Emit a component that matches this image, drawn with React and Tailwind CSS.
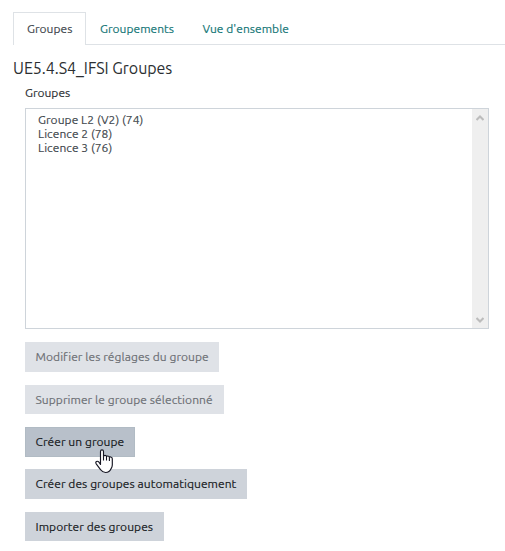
function Tab({ label, active, className }) {
  return (
    <a
      className={`flex h-[33px] items-center text-[12px] tracking-[0.03px] ${
        active
          ? "border border-b-0 border-[#dee2e6] bg-white text-[#40464c]"
          : "border-b border-[#dee2e6] pt-px text-[#127575]"
      } ${className}`}
    >
      {label}
    </a>
  );
}

function Button({ label, tone, className }) {
  const tones = {
    disabled: "bg-[#dfe2e7] text-[#6c6f74]",
    normal: "bg-[#ced3da] text-[#16191c]",
    hover: "border border-[#b1bbc4] bg-[#b8c0ca] text-[#16191c]",
  };
  return (
    <button className={`flex items-center text-[12px] tracking-[0.06px] whitespace-nowrap ${tones[tone]} ${className}`}>
      {label}
    </button>
  );
}

function Chevron({ down }) {
  return (
    <svg width="8" height="6" viewBox="0 0 8 6" className={down ? "rotate-180" : ""}>
      <path d="M0.5 5 L4 1.5 L7.5 5" fill="none" stroke="#bcbcbc" strokeWidth="2.1" />
    </svg>
  );
}

function HandCursor() {
  return (
    <svg className="absolute top-[22px] left-[70px]" width="18" height="25" viewBox="0 0 18 25">
      <path
        d="M5.5 15.5 V2.5 Q5.5 0.8 7 0.8 Q8.5 0.8 8.5 2.5 V7.5 Q8.7 6.3 10 6.3 Q11.3 6.4 11.5 7.6 Q12 6.8 13 7 Q14.2 7.2 14.4 8.4 Q15 7.8 15.8 8 Q17.3 8.3 17.3 9.8 V16 Q17.3 18 16 19.8 Q14.5 23.5 10.6 23.5 Q7.5 23.5 5.7 20.8 L1.2 14.8 Q0.3 13.3 1.4 12.5 Q2.7 11.8 4 13.2 Z"
        fill="#fff"
        stroke="#151522"
        strokeWidth="1.15"
        strokeLinejoin="round"
      />
      <path d="M8.5 7.5 V11.5 M11.5 7.5 V11.5 M14.4 8.4 V12" fill="none" stroke="#151522" strokeWidth="1.1" />
    </svg>
  );
}

export default function App() {
  return (
    <main className="h-[551px] w-[505px] overflow-hidden bg-white pt-3 pl-[13px] font-['Ubuntu','Noto_Sans',sans-serif] text-[#2c2f32] [-webkit-text-stroke:0.15px]">
      <nav className="flex">
        <Tab label="Groupes" active className="w-[73px] pl-[13px]" />
        <Tab label="Groupements" className="w-[103px] pl-[14px]" />
        <Tab label="Vue d'ensemble" className="flex-1 pl-[13.5px]" />
      </nav>
      <h1 className="mt-3 h-[22px] text-[16px] leading-[22px] tracking-[-0.05px] whitespace-nowrap [-webkit-text-stroke:0]">UE5.4.S4_IFSI Groupes</h1>
      <div className="ml-3">
        <label className="mt-1.5 block h-4 text-[12px] leading-4">Groupes</label>
        <div className="mt-[7px] flex h-[221px] w-[464px] border border-[#ced4da]">
          <ul className="flex-1 pt-1 pl-3 text-[12px] leading-[14px] tracking-[0.05px] text-[#40464c]">
            <li>Groupe L2 (V2) (74)</li>
            <li>Licence 2 (78)</li>
            <li>Licence 3 (76)</li>
          </ul>
          <div className="flex w-4 flex-col items-center justify-between bg-[#efefef] pt-[6px] pb-[5px] pr-px">
            <Chevron />
            <Chevron down />
          </div>
        </div>
        <div className="mt-[13px] flex flex-col items-start">
          <Button tone="disabled" label="Modifier les réglages du groupe" className="h-[30px] w-[194px] pl-[10.5px]" />
          <Button tone="disabled" label="Supprimer le groupe sélectionné" className="mt-[13px] h-[29px] w-[199px] pl-[10.5px]" />
          <div className="relative mt-[13px]">
            <Button tone="hover" label="Créer un groupe" className="h-[30px] w-[110px] pl-[9.5px]" />
            <HandCursor />
          </div>
          <Button tone="normal" label="Créer des groupes automatiquement" className="mt-3 h-[30px] w-[222px] pl-[10.5px]" />
          <Button tone="normal" label="Importer des groupes" className="mt-[13px] h-[29px] w-[139px] pl-[10.5px]" />
        </div>
      </div>
    </main>
  );
}
